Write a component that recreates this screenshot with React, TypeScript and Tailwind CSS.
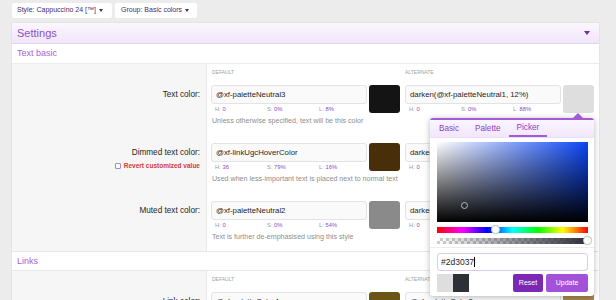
import React from 'react';

type Val = { v: string; h: string; s: string; l: string; sw: string };
type Row = { label: string; revert?: boolean; header?: boolean; def: Val; alt: Val; desc?: string; last?: boolean };

const rows: Row[] = [
    {
        label: 'Text color:',
        header: true,
        def: { v: '@xf-paletteNeutral3', h: '0', s: '0%', l: '8%', sw: '#141414' },
        alt: { v: 'darken(@xf-paletteNeutral1, 12%)', h: '0', s: '0%', l: '88%', sw: '#dedede' },
        desc: 'Unless otherwise specified, text will be this color',
    },
    {
        label: 'Dimmed text color:',
        revert: true,
        def: { v: '@xf-linkUgcHoverColor', h: '36', s: '79%', l: '16%', sw: '#492f09' },
        alt: { v: 'darken(@xf-linkUgcHoverColor, 12%)', h: '0', s: '0%', l: '12%', sw: '#1f1f1f' },
        desc: 'Used when less-important text is placed next to normal text',
    },
    {
        label: 'Muted text color:',
        def: { v: '@xf-paletteNeutral2', h: '0', s: '0%', l: '54%', sw: '#8a8a8a' },
        alt: { v: 'darken(@xf-paletteNeutral2, 12%)', h: '0', s: '0%', l: '42%', sw: '#6b6b6b' },
        desc: 'Text is further de-emphasised using this style',
        last: true,
    },
];

const linkRow: Row = {
    label: 'Link color:',
    header: true,
    def: { v: '@xf-paletteColor4', h: '42', s: '63%', l: '26%', sw: '#6c5419' },
    alt: { v: '@xf-paletteColor3', h: '36', s: '38%', l: '48%', sw: '#a8874c' },
};

const Picker = () => (
    <div className="absolute right-0 top-[33px] z-20 w-[164px] bg-white rounded-[3px] shadow-[0_1px_6px_rgba(0,0,0,0.28)] border-t-2 border-[#a35ad6]">
        {/* arrow */}
        <div className="absolute -top-[7px] right-[11px] w-0 h-0 border-l-[5px] border-r-[5px] border-b-[5px] border-l-transparent border-r-transparent border-b-[#a35ad6]" />

        {/* tabs */}
        <div className="flex h-[18px] pl-[1px] bg-[linear-gradient(to_bottom,#fbf6fe,#f2e6fb)] border-b border-[#ecdff5] text-[8.2px] text-[#8a3fc2]">
            <div className="px-[8px] leading-[17px]">Basic</div>
            <div className="px-[8px] leading-[17px]">Palette</div>
            <div className="px-[8px] leading-[15px] border-b-2 border-[#a35ad6]">Picker</div>
        </div>

        <div className="px-[7px] pr-[6px] pt-[4px] pb-[3px] border-b border-[#ececec]">
            {/* saturation / value area */}
            <div className="relative h-[80px] bg-[#0a45f5]">
                <div className="absolute inset-0 bg-[linear-gradient(to_right,#fff,rgba(255,255,255,0))]" />
                <div className="absolute inset-0 bg-[linear-gradient(to_bottom,rgba(0,0,0,0),#000)]" />
                <div className="absolute left-[24px] top-[60px] w-[7px] h-[7px] rounded-full border border-[#b5b5b5]" />
            </div>
            {/* hue */}
            <div className="relative mt-[5px] h-[6px] bg-[linear-gradient(to_right,#f00,#f0f,#00f,#0ff,#0f0,#ff0,#f00)]">
                <div className="absolute left-[54px] -top-[2px] w-[9px] h-[9px] rounded-full bg-white border border-[#cfcfcf] shadow-[0_0_1px_rgba(0,0,0,0.3)]" />
            </div>
            {/* alpha */}
            <div className="relative mt-[5px] h-[6px] bg-[repeating-conic-gradient(#cfcfcf_0_25%,#fff_0_50%)] bg-[length:6px_6px]">
                <div className="absolute inset-0 bg-[linear-gradient(to_right,rgba(45,48,55,0),#2d3037)]" />
                <div className="absolute -right-[4px] -top-[2px] w-[9px] h-[9px] rounded-full bg-white border border-[#cfcfcf] shadow-[0_0_1px_rgba(0,0,0,0.3)]" />
            </div>
        </div>

        <div className="px-[7px] pr-[6px] pt-[5px] pb-[4px]">
            <div className="flex items-center h-[18px] rounded-[3px] border border-[#dccbea] pl-[3px] text-[8.5px] text-[#1e1e1e]">
                #2d3037
                <span className="w-[1px] h-[10px] bg-black" />
            </div>
            <div className="flex items-center mt-[3px] h-[18px]">
                <div className="w-[16px] h-[18px] bg-[#dedede]" />
                <div className="w-[16px] h-[18px] bg-[#2d3037]" />
                <div className="flex-1" />
                <button className="w-[30px] h-[18px] rounded-[2px] bg-[#7d28b3] text-white text-[7px]">Reset</button>
                <button className="ml-[3px] w-[42px] h-[18px] rounded-[2px] bg-[#a451d9] text-white text-[7px]">Update</button>
            </div>
        </div>
    </div>
);

const Field = ({ f, picker }: { f: Val; picker?: boolean }) => (
    <div className="flex gap-[2px] w-[189px]">
        <div className="w-[156px]">
            <div className="h-[19px] rounded-[3px] border border-[#e3e3e3] bg-[#fafafa] px-[4px] text-[7.8px] leading-[17px] text-[#1e1e1e] whitespace-nowrap overflow-hidden">
                {f.v}
            </div>
            <div className="flex h-[10px] text-[5.8px] leading-[10px] text-[#9b9b9b]">
                <span className="w-[52px] pl-[4px]">H: <span className="text-[#8a4cc4]">{f.h}</span></span>
                <span className="w-[52px] pl-[4px]">S: <span className="text-[#8a4cc4]">{f.s}</span></span>
                <span className="w-[52px] pl-[4px]">L: <span className="text-[#8a4cc4]">{f.l}</span></span>
            </div>
        </div>
        <div className="relative">
            <div className="w-[31px] h-[28px] rounded-[3px]" style={{ background: f.sw }} />
            {picker && <Picker />}
        </div>
    </div>
);

const FormRow = ({ row, picker }: { row: Row; picker?: boolean }) => (
    <div className="flex">
        <div className={`w-[195px] shrink-0 bg-[#f6f6f6] border-r border-[#e8e8e8] pr-[6px] text-right ${row.header ? 'pt-[21px]' : 'pt-0'}`}>
            <div className="text-[8.2px] leading-[19px] text-[#1f1f1f]">{row.label}</div>
            {row.revert && (
                <div className="flex items-center justify-end gap-[3px] text-[6.5px] leading-[8px] font-bold text-[#d23b3b]">
                    <span className="w-[6px] h-[6px] border border-[#a98bc4] rounded-[1px] bg-white" />
                    Revert customized value
                </div>
            )}
        </div>
        <div className={`flex-1 pl-[4px] pr-[5px] ${row.last ? 'pb-[7px]' : 'pb-[15px]'}`}>
            {row.header && (
                <div className="flex gap-[5px] h-[21px] pt-[5px] text-[5px] leading-[6px] uppercase text-[#a2a2a2]">
                    <div className="w-[189px] pl-[1px]">Default</div>
                    <div className="w-[189px]">Alternate</div>
                </div>
            )}
            <div className="flex gap-[5px]">
                <Field f={row.def} />
                <Field f={row.alt} picker={picker} />
            </div>
            {row.desc && (
                <div className="h-[14px] leading-[14px] text-[7.1px] text-[#8e8e8e] pl-[1px] whitespace-nowrap">{row.desc}</div>
            )}
        </div>
    </div>
);

const Caret = ({ color }: { color: string }) => (
    <span className={`inline-block w-0 h-0 border-l-[2.5px] border-r-[2.5px] border-t-[3px] border-l-transparent border-r-transparent ${color}`} />
);

export default function App() {
    return (
        <div className="w-[616px] h-[300px] overflow-hidden bg-[#ececec] font-['Liberation_Sans',Arial,sans-serif]">
            {/* top filters */}
            <div className="flex gap-[3px] pl-[12px] pt-[3px] h-[23px]">
                <button className="flex items-center gap-[3px] w-[100px] h-[15px] pl-[5px] bg-white rounded-[2px] text-[7px] text-[#4b2a6e]">
                    Style: Cappuccino 24 [™]
                    <Caret color="border-t-[#4b2a6e]" />
                </button>
                <button className="flex items-center gap-[3px] w-[82px] h-[15px] pl-[6px] bg-white rounded-[2px] text-[7px] text-[#4b2a6e]">
                    Group: Basic colors
                    <Caret color="border-t-[#4b2a6e]" />
                </button>
            </div>

            <div className="ml-[12px] w-[587px] bg-white shadow-[0_0_1px_rgba(0,0,0,0.2)]">
                <div className="flex items-center justify-between h-[21px] px-[5px] pr-[9px] bg-[linear-gradient(to_bottom,#fbf7fe,#f1e5fa)] border-b border-[#e4d5ef]">
                    <span className="text-[11px] text-[#8f4fc2]">Settings</span>
                    <span className="w-0 h-0 border-l-[3.5px] border-r-[3.5px] border-t-[4px] border-l-transparent border-r-transparent border-t-[#6e2ea6]" />
                </div>
                <div className="h-[20px] leading-[19px] px-[5px] border-b border-[#ececec] text-[9px] text-[#a862d2]">Text basic</div>

                {rows.map((r, i) => (
                    <FormRow key={r.label} row={r} picker={i === 0} />
                ))}

                <div className="h-[20px] leading-[18px] px-[5px] border-t border-b border-[#e8e8e8] text-[9px] text-[#a862d2]">Links</div>
                <FormRow row={linkRow} />
            </div>
        </div>
    );
}
